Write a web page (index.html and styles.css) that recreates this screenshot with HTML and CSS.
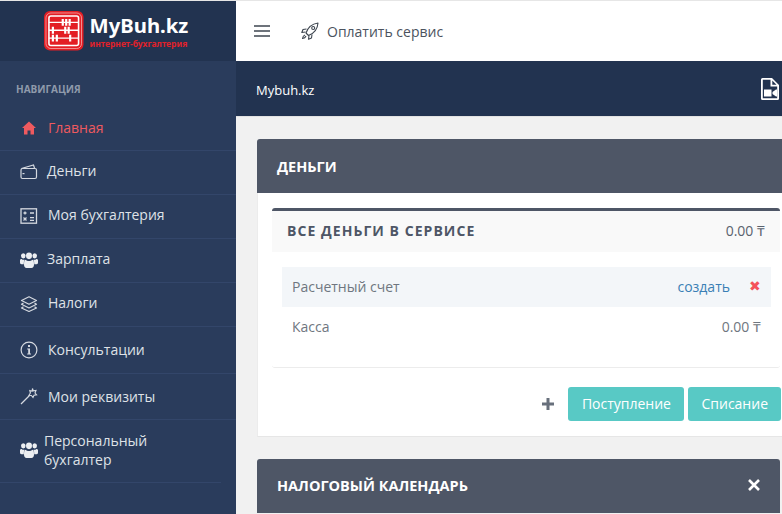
FILE: index.html
```html
<!DOCTYPE html>
<html lang="ru">
<head>
  <meta charset="UTF-8">
  <title>MyBuh.kz</title>
  <link rel="stylesheet" href="styles.css">
</head>
<body>
  <div class="app">
    <aside class="sidebar">
      <div class="brand">
        <svg class="brand-logo" viewBox="0 0 40 40">
          <rect x="0" y="0" width="40" height="40" rx="6" fill="#e31e24"/>
          <rect x="2" y="2" width="36" height="36" rx="5" fill="none" stroke="#fff" stroke-opacity=".5"/>
          <rect x="5" y="5" width="30" height="30" rx="2" fill="none" stroke="#fff" stroke-width="1.6"/>
          <path d="M5 11.500h30M5 19.500h30M5 27.500h30" stroke="#fff" stroke-width="1.4"/>
          <path d="M19 8v7M22.500 8v7M26 8v7M9 16v7M21.500 16v7M25 16v7M9 24v7M13 24v7M26.500 24v7" stroke="#fff" stroke-width="2.200"/>
        </svg>
        <div class="brand-text">
          <div class="brand-name">MyBuh.kz</div>
          <div class="brand-sub">интернет-бухгалтерия</div>
        </div>
      </div>
      <div class="nav-title">НАВИГАЦИЯ</div>
      <ul class="nav">
        <li class="nav-item active">
          <svg class="nav-icon" viewBox="0 0 18 18"><path fill="#ef5a5f" d="M9 2.500 16 9h-2v6.500h-3.500v-4h-3v4H4V9H2z"/></svg>
          <span>Главная</span>
        </li>
        <li class="nav-item">
          <svg class="nav-icon" viewBox="0 0 18 16"><g fill="none" stroke="#d5d9e0" stroke-width="1.200"><path d="M1.500 4.500 13.500 1l1 3"/><rect x="1" y="4.500" width="15.500" height="10" rx="1.500"/></g><path fill="#d5d9e0" d="M2.500 9h2v1.200h-2z"/></svg>
          <span>Деньги</span>
        </li>
        <li class="nav-item">
          <svg class="nav-icon" viewBox="0 0 18 16"><rect x="1" y="0.800" width="15.500" height="14.400" fill="none" stroke="#d5d9e0" stroke-width="1.300"/><path stroke="#d5d9e0" stroke-width="1.300" d="M3.500 5h3M5 3.500v3M10 5h4M3.500 9.500l3 3M6.500 9.500l-3 3M10 9.700h4M10 12.300h4"/></svg>
          <span class="shift">Моя бухгалтерия</span>
        </li>
        <li class="nav-item">
          <svg class="nav-icon" viewBox="0 0 18 18"><use href="#users" y="1" width="18" height="16"/></svg>
          <span>Зарплата</span>
        </li>
        <li class="nav-item">
          <svg class="nav-icon" viewBox="0 0 18 16"><g fill="none" stroke="#d5d9e0" stroke-width="1.200" stroke-linejoin="round"><path d="M9 .800 16.500 4.500 9 8.200 1.500 4.500z"/><path d="M3.500 7 1.500 8.200 9 12l7.500-3.800L14.500 7"/><path d="M3.500 10.800 1.500 12 9 15.500l7.500-3.500-2-1.200"/></g></svg>
          <span class="shift">Налоги</span>
        </li>
        <li class="nav-item tall">
          <svg class="nav-icon" viewBox="0 0 18 18"><circle cx="9" cy="9" r="7.900" fill="none" stroke="#d5d9e0" stroke-width="1.200"/><path fill="#d5d9e0" d="M8 4h2v2H8zM7.200 7.500H10V12.500h1v1H7.200v-1h1v-4h-1z"/></svg>
          <span>Консультации</span>
        </li>
        <li class="nav-item tall">
          <svg class="nav-icon" viewBox="0 0 18 18"><path stroke="#d5d9e0" stroke-width="1.200" d="M1 17 10 8"/><path fill="none" stroke="#d5d9e0" stroke-width="1.100" d="m12.500 1.500.8 2.400 2.700-.4-1 2.500 1.600 1.800-2.600.4-1 2.300-1.600-2-2.400-.3 1.400-2.200-.6-2.500 2.300.7z"/></svg>
          <span>Мои реквизиты</span>
        </li>
        <li class="nav-item double">
          <svg class="nav-icon" viewBox="0 0 18 18"><use href="#users" y="1" width="18" height="16"/></svg>
          <span>Персональный<br>бухгалтер</span>
        </li>
      </ul>
    </aside>

    <div class="main">
      <header class="topbar">
        <svg class="burger" viewBox="0 0 16 12"><path stroke="#3e4650" stroke-width="1.500" d="M0 1h16M0 6h16M0 11h16"/></svg>
        <svg class="rocket" viewBox="0 0 18 18"><g fill="none" stroke="#3e4650" stroke-width="1.100" stroke-linejoin="round"><path d="M6.500 12.500 5 11c1.500-4.500 5-9 12-10-.5 7-5 10.800-9.500 12.500z"/><circle cx="12.200" cy="6" r="1.500"/><path d="M5.500 7 2 7.500.8 10.500 4.500 10M11 12.500l-.5 3.500-3 1.200.5-3.700M4 13c-1.500.5-2.300 2-2.500 3.500C3 16.300 4.500 15.500 5 14"/></g></svg>
        <span class="pay-link">Оплатить сервис</span>
      </header>
      <div class="crumbs">
        <span class="crumb">Mybuh.kz</span>
        <svg class="video-file" viewBox="0 0 18 22"><path fill="#fff" d="M1.500 0H11l7 7v13.500a1.500 1.500 0 0 1-1.500 1.500h-15A1.500 1.500 0 0 1 0 20.500v-19A1.500 1.500 0 0 1 1.500 0zM1.800 1.800v18.400h14.400V8.500H9.500V1.800zM11.300 2.500v4.200h4.200z" fill-rule="evenodd"/><path fill="#fff" d="M3 11.500h7.500v7H3zM11.500 14l3.500-2.500h1v7h-1L11.500 16z"/></svg>
      </div>
      <div class="content">
        <section class="panel panel-money">
          <h2 class="panel-head">ДЕНЬГИ</h2>
          <div class="panel-body">
            <div class="box">
              <div class="box-head">
                <h3>ВСЕ ДЕНЬГИ В СЕРВИСЕ</h3>
                <span class="sum">0.00 ₸</span>
              </div>
              <div class="box-list">
                <div class="row shaded">
                  <span>Расчетный счет</span>
                  <span class="row-right"><a class="create">создать</a><span class="remove">✖</span></span>
                </div>
                <div class="row">
                  <span>Касса</span>
                  <span class="sum">0.00 ₸</span>
                </div>
              </div>
            </div>
            <div class="actions">
              <svg class="plus" viewBox="0 0 12 12"><path stroke="#68707c" stroke-width="3" d="M6 0v12M0 6h12"/></svg>
              <button class="btn btn-in">Поступление</button>
              <button class="btn">Списание</button>
            </div>
          </div>
        </section>
        <section class="panel">
          <h2 class="panel-head panel-head-close">НАЛОГОВЫЙ КАЛЕНДАРЬ
            <svg class="close" viewBox="0 0 12 12"><path stroke="#fff" stroke-width="2.600" d="m1 1 10 10M11 1 1 11"/></svg>
          </h2>
        </section>
      </div>
    </div>
  </div>

  <svg class="defs" width="0" height="0">
    <symbol id="users" viewBox="0 1 18 14.500" preserveAspectRatio="none">
      <path fill="#eceef1" d="M3.300 2.200a2.300 2.300 0 1 1 0 4.600 2.300 2.300 0 0 1 0-4.600zM14.700 2.200a2.300 2.300 0 1 1 0 4.600 2.300 2.300 0 0 1 0-4.600zM9 1.500a3 3 0 1 1 0 6 3 3 0 0 1 0-6zM0 8.500c0-.8 1-1.200 1.600-1.200.5.500 1.300.8 2 .8l.9-.1C4 9.200 3.700 10.500 3.800 12H1.500C.5 12 0 11.500 0 10.500zM18 8.500c0-.8-1-1.200-1.600-1.200-.5.5-1.300.8-2 .8l-.9-.1c.5 1.200.8 2.500.7 4h2.300c1 0 1.500-.5 1.500-1.500zM5.500 8c.8.800 2.200 1.200 3.500 1.200s2.700-.4 3.500-1.200c1.200.3 1.500 1.800 1.500 4.300 0 2-1 3.200-2.500 3.200H6.500C5 15.500 4 14.300 4 12.300 4 9.800 4.300 8.300 5.500 8z"/>
    </symbol>
  </svg>
</body>
</html>
```

FILE: styles.css
```css
* {
  box-sizing: border-box;
}
html, body {
  height: 100%;
  margin: 0;
  overflow: hidden;
}
body {
  background: #e6e6e6;
  padding-top: 1px;
  font-family: "Open Sans", sans-serif;
  font-size: 14px;
  color: #6f7680;
}
.app {
  display: flex;
  height: 513px;
}
.defs {
  position: absolute;
}

/* sidebar */
.sidebar {
  flex: 0 0 236px;
  background: #2a3c5c;
  color: #dfe2e7;
}
.brand {
  display: flex;
  align-items: center;
  gap: 6px;
  height: 60px;
  padding-left: 44px;
  background: #223350;
}
.brand-logo {
  width: 39.500px;
  height: 39.500px;
}
.brand-text {
  display: flex;
  flex-direction: column;
  width: 100px;
  margin-top: -1px;
}
.brand-name {
  font-family: "Noto Sans", sans-serif;
  font-weight: 700;
  font-size: 20.300px;
  line-height: 25px;
  color: #fff;
}
.brand-sub {
  font-family: "Noto Sans", sans-serif;
  font-weight: 700;
  font-size: 8.500px;
  line-height: 11px;
  white-space: nowrap;
  color: #e0212a;
}
.nav-title {
  padding: 21px 0 0 16px;
  height: 44px;
  font-size: 10px;
  line-height: 14px;
  font-weight: 700;
  color: #8f9aab;
}
.nav {
  list-style: none;
  margin: 0;
  padding: 0;
}
.nav-item {
  display: flex;
  align-items: center;
  gap: 9px;
  height: 44px;
  padding: 0 0 2px 20px;
  border-bottom: 1px solid #33466a;
  font-size: 14px;
}
.nav-item span {
  margin-top: -2px;
}
.nav-item span.shift {
  margin-left: 1px;
}
.nav-item.active {
  height: 46px;
  padding-bottom: 0;
  gap: 10px;
  color: #ef5a5f;
}
.nav-item.active span, .nav-item.tall span {
  margin-top: 0;
}
.nav-item.tall {
  height: 46.500px;
  padding-bottom: 0;
  gap: 10px;
}
.nav-item.double {
  height: 63px;
  gap: 6px;
  padding-bottom: 2px;
  line-height: 19px;
  margin-right: 15px;
}
.nav-item.double span {
  margin-top: 0;
}
.nav-icon {
  flex: none;
  width: 18px;
  height: 18px;
}

/* top */
.main {
  flex: 1;
  min-width: 0;
  display: flex;
  flex-direction: column;
  background: #f1f1f1;
}
.topbar {
  flex: none;
  display: flex;
  align-items: center;
  height: 60px;
  background: #fff;
  padding-left: 18px;
  color: #4b535e;
}
.burger {
  width: 16px;
  height: 12px;
}
.rocket {
  width: 18px;
  height: 18px;
  margin-left: 31px;
}
.pay-link {
  margin-left: 8px;
  font-size: 14px;
}
.crumbs {
  flex: none;
  display: flex;
  align-items: center;
  justify-content: space-between;
  height: 56px;
  padding: 0 3px 0 20px;
  background: #223350;
  border-bottom: 1px solid #e2e2e2;
  color: #fff;
  font-size: 13px;
}
.crumb {
  margin-top: 2px;
}
.video-file {
  width: 18px;
  height: 22px;
}

/* panels */
.content {
  flex: none;
  padding: 22px 2px 0 21px;
}
.panel {
  margin-bottom: 22px;
}
.panel-money {
  margin-right: -4px;
}
.panel-head {
  display: flex;
  align-items: center;
  justify-content: space-between;
  height: 54px;
  margin: 0;
  padding: 0 20px;
  background: #4e5666;
  border-radius: 3px 3px 0 0;
  color: #fff;
  font-size: 14.500px;
  font-weight: 700;
}
.panel-head-close {
  padding: 0 20px 2px;
}
.close {
  width: 12px;
  height: 12px;
}
.panel-body {
  padding: 15px 0 15px 14px;
  background: #fff;
  border-bottom: 1px solid #e6e6e6;
  border-left: 1px solid #ececec;
}
.box {
  margin-right: 4px;
  border-top: 3px solid #4e5666;
  border-bottom: 1px solid #ececec;
  border-radius: 3px;
}
.box-head {
  display: flex;
  align-items: center;
  justify-content: space-between;
  height: 41px;
  padding: 0 15px 2px 15px;
  background: #f9f9f9;
  color: #5a626e;
}
.box-head h3 {
  margin: 0;
  font-size: 14px;
  font-weight: 700;
  letter-spacing: 1.050px;
  color: #4e5666;
}
.sum {
  font-size: 14px;
}
.box-list {
  padding: 15px 9px 20px 10px;
}
.row {
  display: flex;
  align-items: center;
  justify-content: space-between;
  height: 40px;
  padding: 0 10px 2px 10px;
}
.row.shaded {
  background: #f3f6f9;
}
.row-right {
  display: flex;
  align-items: center;
}
.create {
  color: #3a7fb5;
}
.remove {
  margin-left: 19px;
  font-size: 14px;
  line-height: 14px;
  color: #f4515a;
}
.actions {
  display: flex;
  align-items: center;
  justify-content: flex-end;
  gap: 4px;
  margin-top: 19px;
  padding-right: 3px;
}
.plus {
  width: 12px;
  height: 12px;
  margin-right: 10px;
}
.btn {
  height: 34px;
  padding: 0 13px 1px;
  border: 0;
  border-radius: 3px;
  background: #58c9c5;
  color: #fff;
  font-family: inherit;
  font-size: 14px;
}
.btn-in {
  padding: 0 13.500px 1px;
}
```
